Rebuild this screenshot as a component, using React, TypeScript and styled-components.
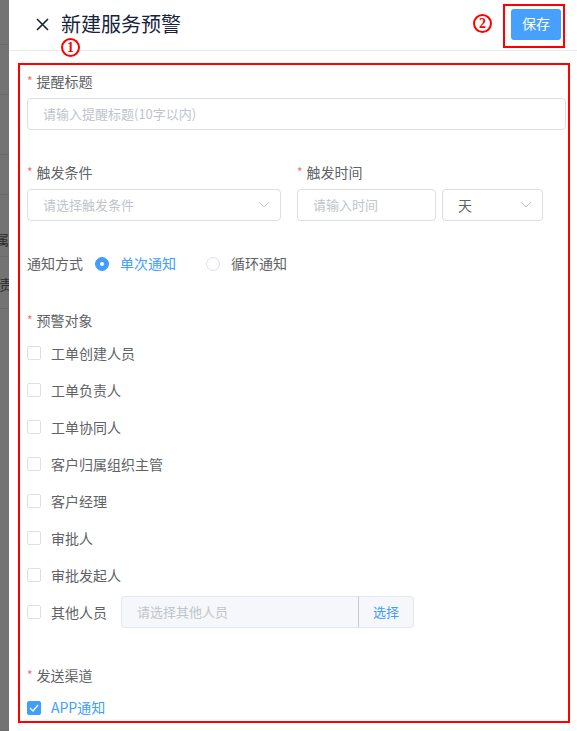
import React from "react";
import styled, { createGlobalStyle } from "styled-components";

const Global = createGlobalStyle`
  html, body { margin: 0; padding: 0; }
  body {
    font-family: "Noto Sans CJK SC", "Noto Sans", sans-serif;
    background: #ffffff;
  }
  * { box-sizing: border-box; }
`;

const Page = styled.div`
  display: flex;
  width: 577px;
  height: 731px;
  overflow: hidden;
`;

const Backdrop = styled.div`
  width: 9px;
  flex: none;
  background: #737373;
  display: flex;
  flex-direction: column;
  overflow: hidden;
`;

const BackRow = styled.div<{ $h: number; $pad?: number }>`
  height: ${(p) => p.$h}px;
  flex: none;
  border-bottom: 1px solid #6a6a6a;
  display: flex;
  justify-content: flex-end;
  align-items: flex-start;
  padding-top: ${(p) => p.$pad ?? 0}px;
  white-space: nowrap;
  font-size: 14px;
  line-height: 18px;
  color: #2a2a2a;
`;

const BackText = styled.span`
  flex: none;
  margin-right: -4px;
`;

const Drawer = styled.div`
  flex: 1;
  background: #ffffff;
  display: flex;
  flex-direction: column;
`;

const Header = styled.div`
  position: relative;
  height: 51px;
  flex: none;
  border-bottom: 1px solid #e8eaec;
  display: flex;
  align-items: center;
  padding: 0 12px 0 27px;
`;

const CloseBtn = styled.span`
  width: 13px;
  height: 13px;
  display: flex;
  align-items: center;
  justify-content: center;
  margin-right: 12px;
  margin-top: -1px;
`;

const Title = styled.h1`
  margin: 0;
  font-size: 20px;
  line-height: 28px;
  font-weight: 400;
  color: #17233d;
  margin-top: -3px;
`;

const Spacer = styled.div`
  flex: 1;
`;

const Mark = styled.span`
  width: 19px;
  height: 19px;
  border: 2px solid #ff0000;
  border-radius: 50%;
  display: inline-flex;
  align-items: center;
  justify-content: center;
  color: #ff0000;
  font-family: "Liberation Serif", "DejaVu Serif", serif;
  font-weight: 700;
  font-size: 14px;
  line-height: 1;
  flex: none;
`;

const MarkTwo = styled(Mark)`
  margin-right: 11px;
  margin-top: -3px;
`;

const MarkOne = styled(Mark)`
  position: absolute;
  left: 52px;
  top: 38px;
  z-index: 2;
  background: #ffffff;
`;

const SaveFrame = styled.div`
  border: 2px solid #ff0000;
  padding: 3px 2px 6px 6px;
  display: flex;
  margin-top: 1px;
`;

const SaveButton = styled.button`
  width: 50px;
  height: 31px;
  border: none;
  border-radius: 3px;
  background: #46a0fc;
  color: #ffffff;
  font-family: inherit;
  font-size: 14px;
  line-height: 20px;
  padding: 0 0 2px;
`;

const Body = styled.div`
  flex: 1;
  padding: 12px 7px 8px 9px;
  display: flex;
  flex-direction: column;
`;

const Frame = styled.div`
  flex: 1;
  border: 2px solid #ff0000;
  padding: 6px 2px 3px 7px;
  display: flex;
  flex-direction: column;
`;

const Field = styled.div<{ $mt?: number }>`
  margin-top: ${(p) => p.$mt ?? 0}px;
  display: flex;
  flex-direction: column;
`;

const Label = styled.div`
  font-size: 14px;
  line-height: 20px;
  color: #606266;
  margin-bottom: 7px;
  display: flex;
  align-items: center;
  white-space: nowrap;
`;

const Star = styled.span`
  color: #f56c6c;
  font-size: 12px;
  line-height: 12px;
  margin-right: 4px;
  align-self: flex-start;
  margin-top: 4px;
`;

const TextBox = styled.div<{ $w?: number; $disabled?: boolean }>`
  height: 32px;
  width: ${(p) => (p.$w ? `${p.$w}px` : "100%")};
  flex: none;
  border: 1px solid ${(p) => (p.$disabled ? "#e4e7ed" : "#dcdfe6")};
  background: ${(p) => (p.$disabled ? "#f5f7fa" : "#ffffff")};
  border-radius: 4px;
  display: flex;
  align-items: center;
  padding: 0 10px 1px 15px;
  font-size: 13px;
  color: #c0c4cc;
  white-space: nowrap;
`;

const Value = styled.span`
  font-size: 14px;
  color: #606266;
`;

const Grow = styled.span`
  flex: 1;
`;

const Chevron = () => (
  <svg width="12" height="7" viewBox="0 0 12 7" fill="none">
    <path d="M1 1L6 6L11 1" stroke="#c0c4cc" strokeWidth="1" />
  </svg>
);

const Columns = styled.div<{ $mt: number }>`
  margin-top: ${(p) => p.$mt}px;
  display: flex;
  gap: 16px;
`;

const Col = styled.div<{ $w: number }>`
  width: ${(p) => p.$w}px;
  display: flex;
  flex-direction: column;
`;

const InputPair = styled.div`
  display: flex;
  gap: 6px;
`;

const InlineRow = styled.div<{ $mt: number }>`
  margin-top: ${(p) => p.$mt}px;
  height: 20px;
  display: flex;
  align-items: center;
  font-size: 14px;
  color: #606266;
`;

const InlineLabel = styled.span`
  margin-right: 12px;
`;

const RadioItem = styled.label<{ $on?: boolean }>`
  display: flex;
  align-items: center;
  margin-right: 30px;
  color: ${(p) => (p.$on ? "#409eff" : "#606266")};
`;

const RadioDot = styled.span<{ $on?: boolean }>`
  width: 14px;
  height: 14px;
  border-radius: 50%;
  border: 1px solid ${(p) => (p.$on ? "#409eff" : "#dcdfe6")};
  background: ${(p) => (p.$on ? "#409eff" : "#ffffff")};
  display: flex;
  align-items: center;
  justify-content: center;
  margin-right: 11px;
  margin-top: 1px;
  &::after {
    content: "";
    width: 4px;
    height: 4px;
    border-radius: 50%;
    background: #ffffff;
    display: ${(p) => (p.$on ? "block" : "none")};
  }
`;

const CheckList = styled.div`
  margin-top: -3px;
  display: flex;
  flex-direction: column;
`;

const CheckRow = styled.div<{ $h?: number; $mt?: number }>`
  height: ${(p) => p.$h ?? 37}px;
  margin-top: ${(p) => p.$mt ?? 0}px;
  display: flex;
  align-items: center;
  font-size: 14px;
`;

const Box = styled.span<{ $on?: boolean }>`
  width: 14px;
  height: 14px;
  flex: none;
  border-radius: 2px;
  border: 1px solid ${(p) => (p.$on ? "#409eff" : "#dcdfe6")};
  background: ${(p) => (p.$on ? "#409eff" : "#ffffff")};
  display: flex;
  align-items: center;
  justify-content: center;
  margin-right: 10px;
  margin-top: 1px;
`;

const CheckText = styled.span<{ $on?: boolean }>`
  color: ${(p) => (p.$on ? "#409eff" : "#606266")};
  white-space: nowrap;
`;

const Group = styled.div`
  margin-left: 14px;
  display: flex;
  height: 32px;
`;

const GroupInput = styled(TextBox)`
  border-radius: 4px 0 0 4px;
  border-right: none;
`;

const Append = styled.div`
  width: 56px;
  height: 32px;
  flex: none;
  border: 1px solid #e4e7ed;
  border-left: 1px solid #c8cbd2;
  border-radius: 0 4px 4px 0;
  background: #f5f7fa;
  color: #409eff;
  font-size: 13px;
  display: flex;
  align-items: center;
  justify-content: center;
  padding-bottom: 1px;
`;

const Field4 = styled.div`
  margin-top: 37px;
  display: flex;
  flex-direction: column;
`;

const targets = [
  "工单创建人员",
  "工单负责人",
  "工单协同人",
  "客户归属组织主管",
  "客户经理",
  "审批人",
  "审批发起人",
];

function Required({ children }: { children: React.ReactNode }) {
  return (
    <Label>
      <Star>*</Star>
      {children}
    </Label>
  );
}

export default function App() {
  return (
    <>
      <Global />
      <Page>
        <Backdrop>
          <BackRow $h={45} />
          <BackRow $h={50} />
          <BackRow $h={60} />
          <BackRow $h={40} />
          <BackRow $h={62} $pad={35}>
            <BackText>归属:</BackText>
          </BackRow>
          <BackRow $h={52} $pad={18}>
            <BackText>负责</BackText>
          </BackRow>
          <BackRow $h={422} />
        </Backdrop>
        <Drawer>
          <Header>
            <CloseBtn>
              <svg width="13" height="13" viewBox="0 0 13 13" fill="none">
                <path d="M1 1L12 12M12 1L1 12" stroke="#17233d" strokeWidth="1.6" />
              </svg>
            </CloseBtn>
            <Title>新建服务预警</Title>
            <MarkOne>1</MarkOne>
            <Spacer />
            <MarkTwo>2</MarkTwo>
            <SaveFrame>
              <SaveButton>保存</SaveButton>
            </SaveFrame>
          </Header>
          <Body>
            <Frame>
              <Field>
                <Required>提醒标题</Required>
                <TextBox>请输入提醒标题(10字以内)</TextBox>
              </Field>

              <Columns $mt={32}>
                <Col $w={254}>
                  <Required>触发条件</Required>
                  <TextBox>
                    请选择触发条件
                    <Grow />
                    <Chevron />
                  </TextBox>
                </Col>
                <Col $w={269}>
                  <Required>触发时间</Required>
                  <InputPair>
                    <TextBox $w={139}>请输入时间</TextBox>
                    <TextBox $w={101}>
                      <Value>天</Value>
                      <Grow />
                      <Chevron />
                    </TextBox>
                  </InputPair>
                </Col>
              </Columns>

              <InlineRow $mt={32}>
                <InlineLabel>通知方式</InlineLabel>
                <RadioItem $on>
                  <RadioDot $on />
                  单次通知
                </RadioItem>
                <RadioItem>
                  <RadioDot />
                  循环通知
                </RadioItem>
              </InlineRow>

              <Field4>
                <Required>预警对象</Required>
                <CheckList>
                  {targets.map((t) => (
                    <CheckRow key={t}>
                      <Box />
                      <CheckText>{t}</CheckText>
                    </CheckRow>
                  ))}
                  <CheckRow>
                    <Box />
                    <CheckText>其他人员</CheckText>
                    <Group>
                      <GroupInput $w={237} $disabled>
                        请选择其他人员
                      </GroupInput>
                      <Append>选择</Append>
                    </Group>
                  </CheckRow>
                </CheckList>
              </Field4>

              <Field $mt={35}>
                <Required>发送渠道</Required>
                <CheckRow $h={20} $mt={5}>
                  <Box $on>
                    <svg width="10" height="8" viewBox="0 0 10 8" fill="none">
                      <path d="M1 4L4 7L9 1" stroke="#ffffff" strokeWidth="1.4" />
                    </svg>
                  </Box>
                  <CheckText $on>APP通知</CheckText>
                </CheckRow>
              </Field>
            </Frame>
          </Body>
        </Drawer>
      </Page>
    </>
  );
}
